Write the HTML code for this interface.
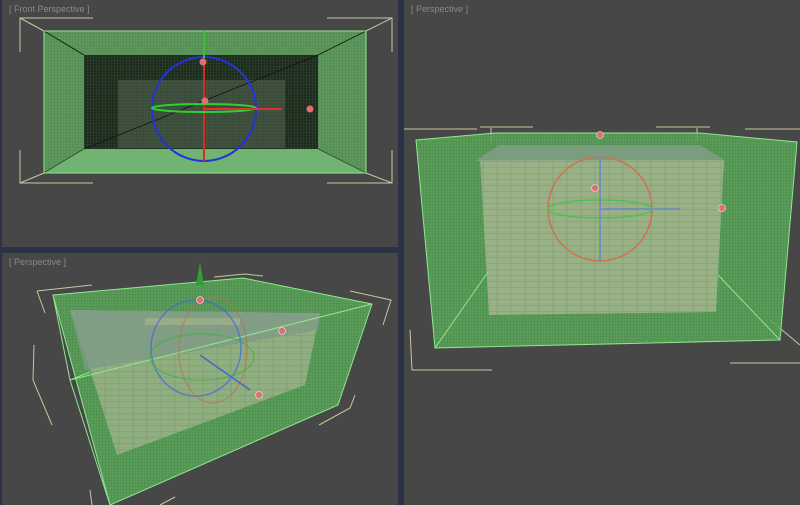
<!DOCTYPE html>
<html><head><style>
body{margin:0;width:800px;height:505px;background:#2c3246;overflow:hidden;font-family:"Liberation Sans",sans-serif}
.v{position:absolute;background:#474747}
.t{position:absolute;left:7px;top:4px;color:#8a8a8a;font-size:9px}
svg{position:absolute;left:0;top:0}
</style></head><body>
<div class="v" style="left:2px;top:0;width:396px;height:247px"><div class="t">[ Front Perspective ]</div></div>
<div class="v" style="left:2px;top:253px;width:396px;height:252px"><div class="t">[ Perspective ]</div></div>
<div class="v" style="left:404px;top:0;width:396px;height:505px"><div class="t">[ Perspective ]</div></div>
<svg width="800" height="505">
<defs>
<pattern id="g" width="3" height="3" patternUnits="userSpaceOnUse"><path d="M0 0H3M0 0V3" stroke="#4a7a4a" stroke-width="0.6"/></pattern>
<pattern id="b" width="14" height="6" patternUnits="userSpaceOnUse"><rect width="14" height="6" fill="#a9b892"/><path d="M0 5.5H14M7 0V6" stroke="#8a9a78" stroke-width="0.6"/></pattern>
</defs>
<!-- top-left -->
<g stroke="#c8c8a0" stroke-width="1" fill="none">
<path d="M20 52V18H93M327 18H392V52M20 150V183H93M327 183H392V150"/>
<path d="M20 18L44 31M392 18L366 31M20 183L44 173M392 183L366 173"/>
</g>
<rect x="44" y="31" width="322" height="142" fill="#62a862" opacity="0.85"/>
<rect x="44" y="31" width="322" height="142" fill="url(#g)"/>
<polygon points="84,55 318,55 318,149 84,149" fill="#1e2a1e"/>
<polygon points="118,80 285,80 285,148 118,148" fill="#3c4a3c"/>
<rect x="84" y="55" width="234" height="94" fill="url(#g)" opacity="0.6"/>
<path d="M44 31L84 55M366 31L318 55M44 173L84 149M366 173L318 149M84 149L318 55" stroke="#111" stroke-width="0.8"/>
<polygon points="44,173 84,149 318,149 366,173" fill="#7cc07c" opacity="0.7"/>
<rect x="44" y="31" width="322" height="142" fill="none" stroke="#90e890"/>
<g fill="none" stroke-width="2">
<circle cx="204" cy="109" r="52" stroke="#2233dd"/>
<path d="M204 161V30" stroke="#d03020"/><path d="M204 30V58" stroke="#30c030"/>
<ellipse cx="204" cy="108" rx="52" ry="4" stroke="#30d030"/>
<path d="M204 109H282" stroke="#e03030"/>
</g>
<circle cx="203" cy="62" r="3.5" fill="#e07070"/><circle cx="205" cy="101" r="3.5" fill="#e07070"/><circle cx="310" cy="109" r="3.5" fill="#e07070"/>
<!-- bottom-left -->
<g stroke="#c8c8a0" fill="none"><path d="M37 291L45 313M37 291L92 285M34 345L33 380L52 425M214 277L245 274L263 276M350 291L391 300L383 325M319 425L350 408L355 395M90 490L92 505M160 505L175 497"/></g>
<polygon points="53,295 243,278 372,304 338,405 110,505" fill="#5cae5c" opacity="0.85"/>
<polygon points="53,295 243,278 372,304 338,405 110,505" fill="url(#g)"/>
<polygon points="70,310 320,313 305,385 117,455 90,370" fill="url(#b)" opacity="0.7"/>
<polygon points="70,310 320,313 318,330 85,370" fill="#7d9a88" opacity="0.75"/>
<polygon points="145,318 240,318 240,325 145,325" fill="#a8b890" opacity="0.6"/>
<polygon points="53,295 243,278 372,304 338,405 110,505" fill="none" stroke="#90e890"/>
<path d="M53 295L70 380L110 505M70 380L372 304M70 380L90 372" stroke="#90e890" fill="none"/>
<path d="M200 262L196 285H204Z" fill="#30a030"/>
<ellipse cx="196" cy="348" rx="45" ry="48" fill="none" stroke="#4466dd" stroke-width="1.5" opacity="0.7"/>
<ellipse cx="213" cy="350" rx="34" ry="53" fill="none" stroke="#c07050" stroke-width="1.5" opacity="0.6"/>
<ellipse cx="202" cy="357" rx="52" ry="23" fill="none" stroke="#40b040" stroke-width="1.5" opacity="0.6"/>
<path d="M200 355L250 390" stroke="#4466cc" stroke-width="1.5"/>
<circle cx="200" cy="300" r="3.5" fill="#e07070" stroke="#eee" stroke-width="0.6"/><circle cx="282" cy="331" r="3.5" fill="#e07070" stroke="#eee" stroke-width="0.6"/><circle cx="259" cy="395" r="3.5" fill="#e07070" stroke="#eee" stroke-width="0.6"/>
<!-- right -->
<g stroke="#c8c8a0" fill="none"><path d="M404 129H477M480 127H533M656 127H710M745 129H800M491 128V142M697 128V142M410 330L412 370H492M770 320L800 345M730 363H800"/></g>
<polygon points="416,140 495,133 700,133 797,142 780,340 435,348" fill="#5cae5c" opacity="0.85"/>
<polygon points="416,140 495,133 700,133 797,142 780,340 435,348" fill="url(#g)"/>
<polygon points="480,160 724,160 716,312 489,315" fill="url(#b)" opacity="0.8"/>
<polygon points="475,161 500,145 700,145 724,160" fill="#8aa090" opacity="0.7"/>
<polygon points="416,140 495,133 700,133 797,142 780,340 435,348" fill="none" stroke="#90e890"/>
<path d="M435 348L488 272M780 340L718 275" stroke="#90e890" fill="none"/>
<circle cx="600" cy="209" r="52" fill="none" stroke="#d07050" stroke-width="1.5"/>
<ellipse cx="600" cy="209" rx="52" ry="9" fill="none" stroke="#50c050" stroke-width="1.5"/>
<path d="M600 155V262M600 209H680" stroke="#6688cc" stroke-width="1.5"/>
<circle cx="600" cy="135" r="3.5" fill="#e07070" stroke="#eee" stroke-width="0.6"/><circle cx="595" cy="188" r="3.5" fill="#e07070" stroke="#eee" stroke-width="0.6"/><circle cx="722" cy="208" r="3.5" fill="#e07070" stroke="#eee" stroke-width="0.6"/>
</svg>
</body></html>
